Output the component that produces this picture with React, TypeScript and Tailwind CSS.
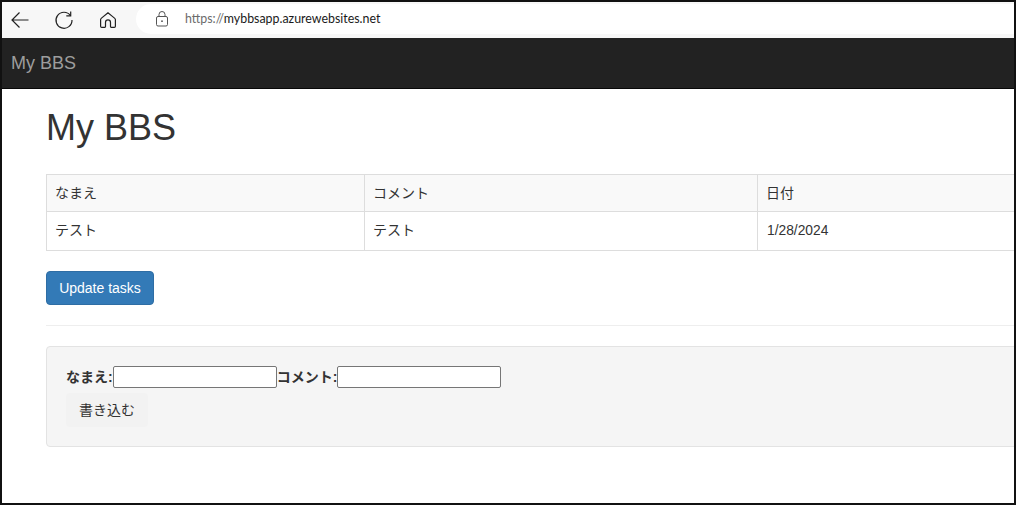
import React from "react";

const cjk = "font-['Liberation_Sans','Noto_Sans_CJK_JP',sans-serif]";

function Back() {
  return (
    <svg width="20" height="20" viewBox="0 0 20 20" fill="none" stroke="#222" strokeWidth="1.2">
      <path d="M18.5 10H2M9.5 2.5L2 10l7.5 7.5" />
    </svg>
  );
}
function Reload() {
  return (
    <svg width="20" height="20" viewBox="0 0 20 20" fill="none" stroke="#222" strokeWidth="1.2">
      <path d="M16.5 5.6A8 8 0 1 0 18 10" />
      <path d="M16.7 1.5v4.4h-4.4" />
    </svg>
  );
}
function Home() {
  return (
    <svg width="18" height="18" viewBox="0 0 18 18" fill="none" stroke="#222" strokeWidth="1.2">
      <path d="M9 1.8L2.2 7.4c-.4.3-.6.7-.6 1.2v6.6c0 .6.5 1.1 1.1 1.1h3.1c.4 0 .7-.3.7-.7v-4.2a2.5 2.5 0 0 1 5 0v4.2c0 .4.3.7.7.7h3.1c.6 0 1.1-.5 1.1-1.1V8.6c0-.5-.2-.9-.6-1.2L9 1.8z" />
    </svg>
  );
}
function Lock() {
  return (
    <svg width="14" height="16" viewBox="0 0 14 16" fill="none" stroke="#555" strokeWidth="1">
      <rect x="1.5" y="5.5" width="11" height="9.5" rx="1.5" />
      <path d="M4 5.5V3.5a3 3 0 0 1 6 0v2" />
      <circle cx="7" cy="10.2" r="0.9" fill="#555" stroke="none" />
    </svg>
  );
}

export default function App() {
  return (
    <div className={`w-[1016px] h-[505px] border-2 border-[#111] bg-white overflow-hidden text-[14px] leading-[20px] text-[#333] ${cjk}`}>
      <div className="h-[36px] bg-[#f7f7f7] flex items-center">
        <div className="ml-[8px] w-[20px] flex justify-center"><Back /></div>
        <div className="ml-[24px] w-[20px] flex justify-center"><Reload /></div>
        <div className="ml-[25px] w-[18px] flex justify-center"><Home /></div>
        <div className="ml-[19px] h-[30px] -mt-[2px] flex-1 bg-white rounded-l-[15px] flex items-center">
          <div className="ml-[19px] flex"><Lock /></div>
          <div className="ml-[16px] text-[12.4px] font-['Lato',sans-serif] text-[#1a1a1a]">
            <span className="text-[#6b6b6b]">https://</span>mybbsapp.azurewebsites.net
          </div>
        </div>
      </div>
      <div className="h-[51px] bg-[#222222] border-b border-[#080808] flex items-center pl-[9px]">
        <span className="text-[18px] text-[#9d9d9d] leading-[20px]">My BBS</span>
      </div>
      <div className="pl-[44px] w-[1100px]">
        <h1 className="mt-[19px] text-[36px] leading-[40px] font-medium text-[#333]">My BBS</h1>
        <table className="mt-[26px] w-[1060px] border-collapse table-fixed">
          <colgroup>
            <col className="w-[318px]" />
            <col className="w-[393px]" />
            <col />
          </colgroup>
          <tbody>
            <tr className="bg-[#f9f9f9] h-[37px]">
              <td className="border border-[#dddddd] px-[8px]">なまえ</td>
              <td className="border border-[#dddddd] px-[8px]">コメント</td>
              <td className="border border-[#dddddd] px-[8px]">日付</td>
            </tr>
            <tr className="h-[39px]">
              <td className="border border-[#dddddd] px-[8px] pb-[2px]">テスト</td>
              <td className="border border-[#dddddd] px-[8px] pb-[2px]">テスト</td>
              <td className="border border-[#dddddd] pl-[9px] pr-[8px] pb-[1px] text-[13.8px]">1/28/2024</td>
            </tr>
          </tbody>
        </table>
        <button className="mt-[20px] block w-[108px] h-[34px] bg-[#337ab7] border border-[#2e6da4] rounded-[4px] text-white text-[14px]">
          Update tasks
        </button>
        <div className="mt-[20px] border-t border-[#eeeeee]" />
        <div className="mt-[20px] w-[1060px] h-[101px] bg-[#f5f5f5] border border-[#e3e3e3] rounded-[4px] pt-[19px] pl-[19px]">
          <div className="flex items-center h-[22px] font-bold">
            <label>なまえ:</label>
            <input className="w-[164px] h-[22px] bg-white border border-[#767676] rounded-[2px]" />
            <label>コメント:</label>
            <input className="w-[164px] h-[22px] bg-white border border-[#767676] rounded-[2px]" />
          </div>
          <button className="mt-[5px] block w-[82px] h-[34px] bg-[#f2f2f2] rounded-[4px] text-[14px] text-[#333]">
            書き込む
          </button>
        </div>
      </div>
    </div>
  );
}
